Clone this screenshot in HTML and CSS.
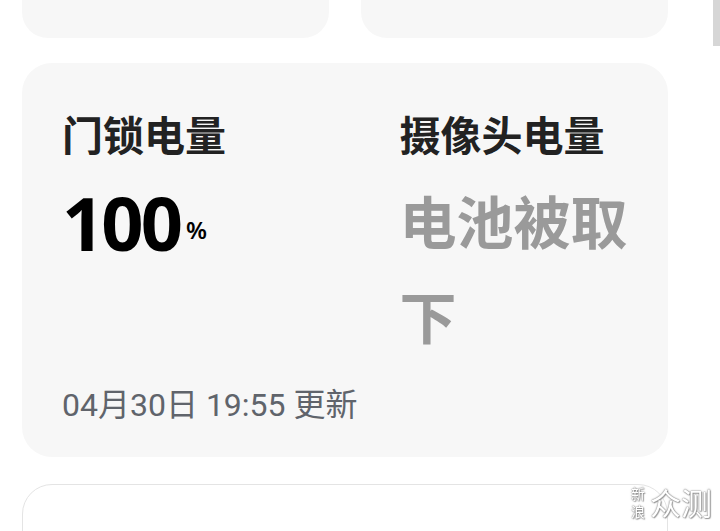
FILE: index.html
```html
<!DOCTYPE html>
<html lang="zh-CN">
<head>
<meta charset="UTF-8" />
<meta name="viewport" content="width=device-width, initial-scale=1" />
<title>电量</title>
<link rel="stylesheet" href="styles.css">
</head>
<body>

<div class="page">
  <div class="top-row">
    <div class="tile"></div>
    <div class="tile"></div>
  </div>

  <div class="battery-card">
    <div class="battery-cols">
      <div class="col col-lock">
        <div class="col-title">门锁电量</div>
        <div class="lock-value">100<span class="unit">%</span></div>
      </div>
      <div class="col col-camera">
        <div class="col-title">摄像头电量</div>
        <div class="camera-value">电池被取下</div>
      </div>
    </div>
    <div class="updated">04月30日 19:55 更新</div>
  </div>

  <div class="next-card"></div>
</div>

<div class="scrollbar"></div>

<div class="watermark">
  <div class="wm-small">新浪</div>
  <span class="wm-big">众测</span>
</div>

</body>
</html>
```

FILE: styles.css
```css
body {
  margin: 0;
  background: #fff;
  font-family: "Noto Sans", "Noto Sans CJK SC", sans-serif;
  overflow: hidden;
}
.page {
  padding: 0 52px 0 22px;
}
.top-row {
  display: flex;
  gap: 32px;
  margin-top: -60px;
}
.tile {
  flex: 1;
  height: 98px;
  background: #f7f7f7;
  border-radius: 26px;
}
.battery-card {
  margin-top: 25px;
  background: #f7f7f7;
  border-radius: 30px;
  padding: 42px 40px 32px;
}
.battery-cols {
  display: flex;
}
.col-lock {
  width: 340px;
}
.col-camera {
  width: 230px;
}
.col-title {
  font-size: 41px;
  line-height: 60px;
  font-weight: bold;
  color: #222;
}
.lock-value {
  margin-top: 10px;
  font-size: 74px;
  line-height: 95px;
  font-weight: bold;
  color: #000;
  letter-spacing: -3px;
}
.unit {
  font-size: 24px;
  font-weight: 600;
  letter-spacing: 0;
  margin-left: 6px;
  vertical-align: 12px;
}
.camera-value {
  margin-top: 10px;
  font-size: 57px;
  line-height: 95px;
  font-weight: bold;
  color: #9a9a9a;
}
.updated {
  margin-top: 20px;
  font-family: Roboto, "Noto Sans CJK SC", sans-serif;
  font-size: 32px;
  line-height: 40px;
  color: #60646b;
}
.next-card {
  margin-top: 27px;
  height: 120px;
  background: #fff;
  border: 1.5px solid #e4e4e4;
  border-radius: 30px;
}
.scrollbar {
  position: fixed;
  top: 0;
  right: 0;
  width: 7px;
  height: 46px;
  background: #d6d6d6;
}
.watermark {
  position: fixed;
  left: 631px;
  top: 484px;
  display: flex;
  align-items: center;
  gap: 5px;
  color: #fff;
  font-family: "Noto Sans CJK SC", sans-serif;
  text-shadow: 0 0 2px #777, 0 0 1px #888, 1px 1px 1px #aaa;
}
.wm-small {
  width: 14px;
  font-size: 14px;
  line-height: 18px;
  word-break: break-all;
}
.wm-big {
  font-size: 31px;
  line-height: 36px;
}
```
